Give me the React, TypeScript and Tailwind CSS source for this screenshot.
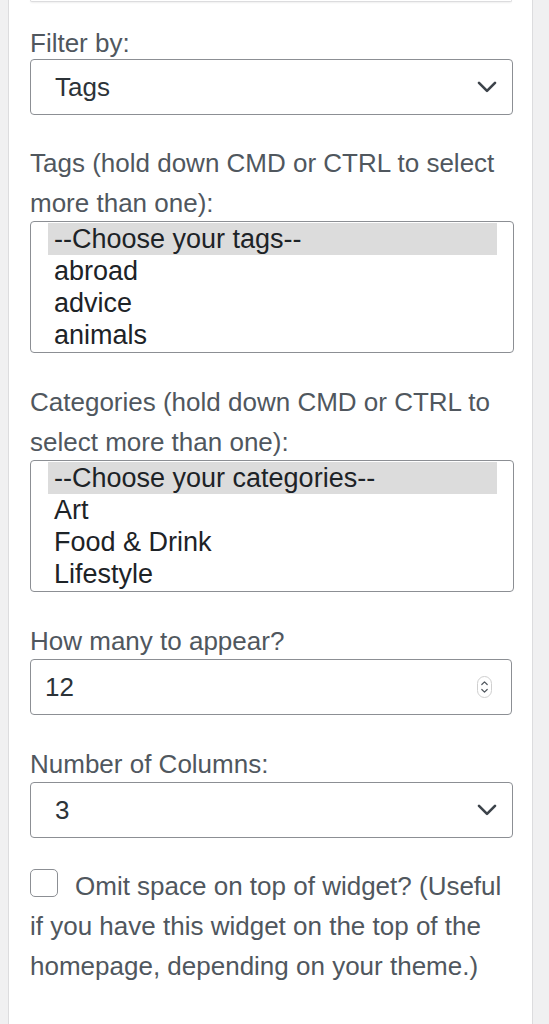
import React from "react";

function Chevron() {
  return (
    <svg width="20" height="12" viewBox="0 0 20 12" className="shrink-0">
      <path d="M2 1.8l8 8 8-8" fill="none" stroke="#3c434a" strokeWidth="2.6" strokeLinecap="round" strokeLinejoin="round" />
    </svg>
  );
}

function SelectBox({ value, className }: { value: string; className?: string }) {
  return (
    <div
      className={
        "flex h-[56px] w-[483px] items-center justify-between rounded-[4px] border border-[#8c8f94] bg-white pl-[24px] pr-[15px] text-[#2c3338] " +
        (className ?? "")
      }
    >
      <span>{value}</span>
      <Chevron />
    </div>
  );
}

function MultiBox({ options, className }: { options: string[]; className?: string }) {
  return (
    <div
      className={
        "h-[132px] w-[484px] overflow-hidden rounded-[4px] border border-[#8c8f94] bg-white pl-[17px] pr-[16px] pt-[1px] text-[27px] leading-[32px] text-[#1d2327] " +
        (className ?? "")
      }
    >
      {options.map((o, i) => (
        <div key={o} className={i === 0 ? "h-[32px] bg-[#dcdcdc] pl-[6px] whitespace-nowrap" : "h-[32px] pl-[6px] whitespace-nowrap"}>
          {o}
        </div>
      ))}
    </div>
  );
}

export default function App() {
  return (
    <div className="flex min-h-screen w-[549px] bg-[#f0f0f1] pl-[8px] font-['Liberation_Sans',Arial,sans-serif]">
      <div className="min-h-screen w-[525px] border-x border-[#dcdcde] bg-white pl-[21px] pr-[22px] text-[26px] leading-[40px] text-[#50575e]">
        <div className="h-[2px] w-[482px] rounded-b-[3px] border-x border-b border-[#dcdcde] bg-white shadow-[0_1px_2px_rgba(0,0,0,0.07)]" />

        <p className="mt-[21px]">Filter by:</p>
        <SelectBox value="Tags" className="-mt-[4px]" />

        <p className="mt-[28px]">Tags (hold down CMD or CTRL to select more than one):</p>
        <MultiBox className="-mt-[2px]" options={["--Choose your tags--", "abroad", "advice", "animals"]} />

        <p className="mt-[29px]">Categories (hold down CMD or CTRL to select more than one):</p>
        <MultiBox className="-mt-[2px]" options={["--Choose your categories--", "Art", "Food & Drink", "Lifestyle"]} />

        <p className="mt-[29px]">How many to appear?</p>
        <div className="-mt-[2px] flex h-[56px] w-[482px] items-center justify-between rounded-[4px] border border-[#8c8f94] bg-white pl-[14px] pr-[19px] text-[#2c3338]">
          <span>12</span>
          <div className="flex h-[22px] w-[15px] items-center justify-center rounded-full border border-[#cfcfcf] bg-white">
            <svg width="9" height="16" viewBox="0 0 9 16">
              <path d="M1.8 5.5L4.5 2.8l2.7 2.7" fill="none" stroke="#50575e" strokeWidth="1.2" strokeLinecap="round" strokeLinejoin="round" />
              <path d="M1.8 10.5l2.7 2.7 2.7-2.7" fill="none" stroke="#50575e" strokeWidth="1.2" strokeLinecap="round" strokeLinejoin="round" />
            </svg>
          </div>
        </div>

        <p className="mt-[29px]">Number of Columns:</p>
        <SelectBox value="3" className="-mt-[2px] w-[482px]" />

        <p className="mt-[28px]">
          <span className="mr-[17px] inline-block h-[28px] w-[28px] rounded-[5px] border border-[#8c8f94] bg-white align-[-2px]" />
          Omit space on top of widget? (Useful if you have this widget on the top of the homepage, depending on your theme.)
        </p>
      </div>
    </div>
  );
}
